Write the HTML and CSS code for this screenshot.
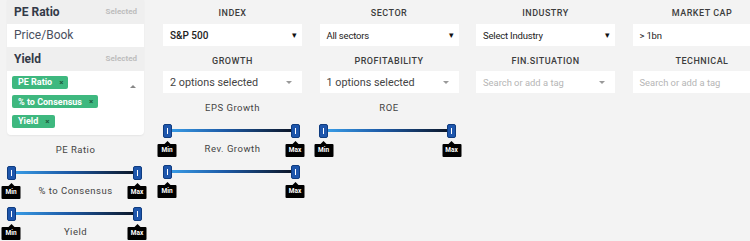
FILE: index.html
```html
<!DOCTYPE html>
<html>
<head>
<meta charset="utf-8">
<link rel="stylesheet" href="styles.css">
</head>
<body>
<div class="page">
  <div class="left">
    <div class="panel">
      <div class="opt opt-sel"><span class="opt-name">PE Ratio</span><span class="opt-tag">Selected</span></div>
      <div class="opt"><span class="opt-plain">Price/Book</span></div>
      <div class="opt opt-sel"><span class="opt-name">Yield</span><span class="opt-tag">Selected</span></div>
      <div class="tags">
        <div class="tag-list">
          <span class="tag">PE Ratio <i>×</i></span>
          <span class="tag">% to Consensus <i>×</i></span>
          <span class="tag">Yield <i>×</i></span>
        </div>
        <span class="caret-up"></span>
      </div>
    </div>
    <div class="sliders sliders-left">
      <div class="sgroup">
        <div class="slabel">PE Ratio</div>
        <div class="slider"><div class="track"></div><span class="handle h-min"><em>Min</em></span><span class="handle h-max"><em>Max</em></span></div>
      </div>
      <div class="sgroup">
        <div class="slabel">% to Consensus</div>
        <div class="slider"><div class="track"></div><span class="handle h-min"><em>Min</em></span><span class="handle h-max"><em>Max</em></span></div>
      </div>
      <div class="sgroup">
        <div class="slabel">Yield</div>
      </div>
    </div>
  </div>

  <div class="col">
    <div class="head">INDEX</div>
    <div class="select"><span class="strong">S&amp;P 500</span><b class="arrow">▾</b></div>
    <div class="head head2">GROWTH</div>
    <div class="multi"><span>2 options selected</span><b class="caret"></b></div>
    <div class="sliders">
      <div class="sgroup">
        <div class="slabel">EPS Growth</div>
        <div class="slider"><div class="track"></div><span class="handle h-min"><em>Min</em></span><span class="handle h-max"><em>Max</em></span></div>
      </div>
      <div class="sgroup">
        <div class="slabel">Rev. Growth</div>
        <div class="slider"><div class="track"></div><span class="handle h-min"><em>Min</em></span><span class="handle h-max"><em>Max</em></span></div>
      </div>
    </div>
  </div>

  <div class="col">
    <div class="head">SECTOR</div>
    <div class="select"><span class="narrow">All sectors</span><b class="arrow">▾</b></div>
    <div class="head head2">PROFITABILITY</div>
    <div class="multi"><span>1 options selected</span><b class="caret"></b></div>
    <div class="sliders">
      <div class="sgroup">
        <div class="slabel">ROE</div>
        <div class="slider"><div class="track"></div><span class="handle h-min"><em>Min</em></span><span class="handle h-max"><em>Max</em></span></div>
      </div>
    </div>
  </div>

  <div class="col">
    <div class="head">INDUSTRY</div>
    <div class="select"><span class="narrow">Select Industry</span><b class="arrow">▾</b></div>
    <div class="head head2">FIN.SITUATION</div>
    <div class="multi"><span class="ph">Search or add a tag</span><b class="caret"></b></div>
  </div>

  <div class="col col-last">
    <div class="head">MARKET CAP</div>
    <div class="select"><span class="narrow">&gt; 1bn</span></div>
    <div class="head head2">TECHNICAL</div>
    <div class="multi"><span class="ph">Search or add a tag</span></div>
  </div>
</div>
</body>
</html>
```
FILE: styles.css
```css
html, body {
  margin: 0;
  padding: 0;
  background: #f3f3f3;
  overflow: hidden;
  font-family: Roboto, "Noto Sans", sans-serif;
}
.page {
  display: flex;
  align-items: flex-start;
  padding-left: 7px;
  gap: 17.5px;
  width: 743px;
  height: 241px;
  overflow: hidden;
}
.left {
  width: 137px;
  flex: none;
  margin-right: 1.5px;
}
.panel {
  background: #fff;
  border-radius: 0 0 4px 4px;
  box-shadow: 0 1px 2px rgba(0,0,0,0.06);
}
.opt {
  height: 23.5px;
  display: flex;
  align-items: center;
  justify-content: space-between;
  padding: 0 7px;
}
.opt-sel { background: #efefef; }
.opt-name { font-size: 12px; font-weight: 700; color: #333a48; }
.opt-plain { font-size: 12px; color: #4a5060; }
.opt-tag { font-size: 8px; font-weight: 700; color: #bdbdbd; }
.tags {
  display: flex;
  justify-content: space-between;
  padding: 5px 8px 7px 5px;
}
.tag-list {
  display: flex;
  flex-direction: column;
  align-items: flex-start;
  gap: 6.5px;
}
.tag {
  display: inline-flex;
  align-items: center;
  height: 13px;
  padding: 0 5px 0 6px;
  background: #3eb87f;
  color: #fff;
  font-size: 9px;
  font-weight: 700;
  border-radius: 2px;
  gap: 4px;
}
.tag i {
  font-style: normal;
  font-size: 8px;
  color: #1d5a3e;
  margin-left: 3px;
}
.caret-up {
  width: 0; height: 0;
  margin-top: 9px;
  border-left: 3px solid transparent;
  border-right: 3px solid transparent;
  border-bottom: 3px solid #888;
}
.sliders-left { margin-top: 6px; }
.col {
  width: 139px;
  flex: none;
  display: flex;
  flex-direction: column;
  padding-top: 5px;
}
.head {
  height: 16px;
  line-height: 16px;
  text-align: center;
  font-size: 9px;
  font-weight: 500;
  letter-spacing: 0.5px;
  color: #3d3d3d;
}
.head2 { margin-top: 7px; }
.select {
  margin-top: 3px;
  height: 22px;
  background: #fff;
  display: flex;
  align-items: center;
  justify-content: space-between;
  padding: 0 5px 0 7px;
  font-size: 9.5px;
  color: #222;
}
.select .strong { font-weight: 500; font-size: 10px; }
.select .narrow { font-weight: 400; letter-spacing: -0.2px; }
.arrow { font-size: 9px; color: #111; font-weight: 400; }
.multi {
  margin-top: 2px;
  height: 22px;
  background: #fff;
  display: flex;
  align-items: center;
  justify-content: space-between;
  padding: 0 10px 0 7px;
  font-size: 10.8px;
  color: #444;
}
.multi .ph { font-size: 9.4px; color: #b5b5b5; }
.caret {
  width: 0; height: 0;
  border-left: 3px solid transparent;
  border-right: 3px solid transparent;
  border-top: 3px solid #999;
}
.sliders { margin-top: 7px; }
.sgroup { height: 41px; }
.slabel {
  height: 16px;
  line-height: 16px;
  text-align: center;
  font-size: 9.5px;
  letter-spacing: 0.5px;
  color: #444;
}
.slider {
  position: relative;
  height: 13px;
  margin-top: 8px;
}
.track {
  position: absolute;
  left: 4px;
  right: 7px;
  top: 5px;
  height: 3px;
  background: linear-gradient(to right, #3aa0ea, #1d5aa6 45%, #0b1322);
}
.handle {
  position: absolute;
  top: 0;
  width: 7px;
  height: 12px;
  margin-left: -4.5px;
  background: #1e56ac;
  border: 1px solid #0f3c80;
  border-radius: 2px;
}
.handle::before {
  content: "";
  position: absolute;
  left: 3px;
  top: 3px;
  width: 1px;
  height: 6px;
  background: #fff;
}
.h-min { left: 4px; }
.h-max { left: calc(100% - 7px); }
.handle em {
  position: absolute;
  top: 19px;
  left: 50%;
  transform: translateX(-50%);
  width: 19px;
  height: 13px;
  line-height: 13px;
  background: #000;
  color: #fff;
  font-style: normal;
  font-size: 6.5px;
  font-weight: 700;
  text-align: center;
  border-radius: 1px;
}
.handle em::before {
  content: "";
  position: absolute;
  left: 50%;
  top: -3px;
  margin-left: -3px;
  border-left: 3px solid transparent;
  border-right: 3px solid transparent;
  border-bottom: 3px solid #000;
}
```
